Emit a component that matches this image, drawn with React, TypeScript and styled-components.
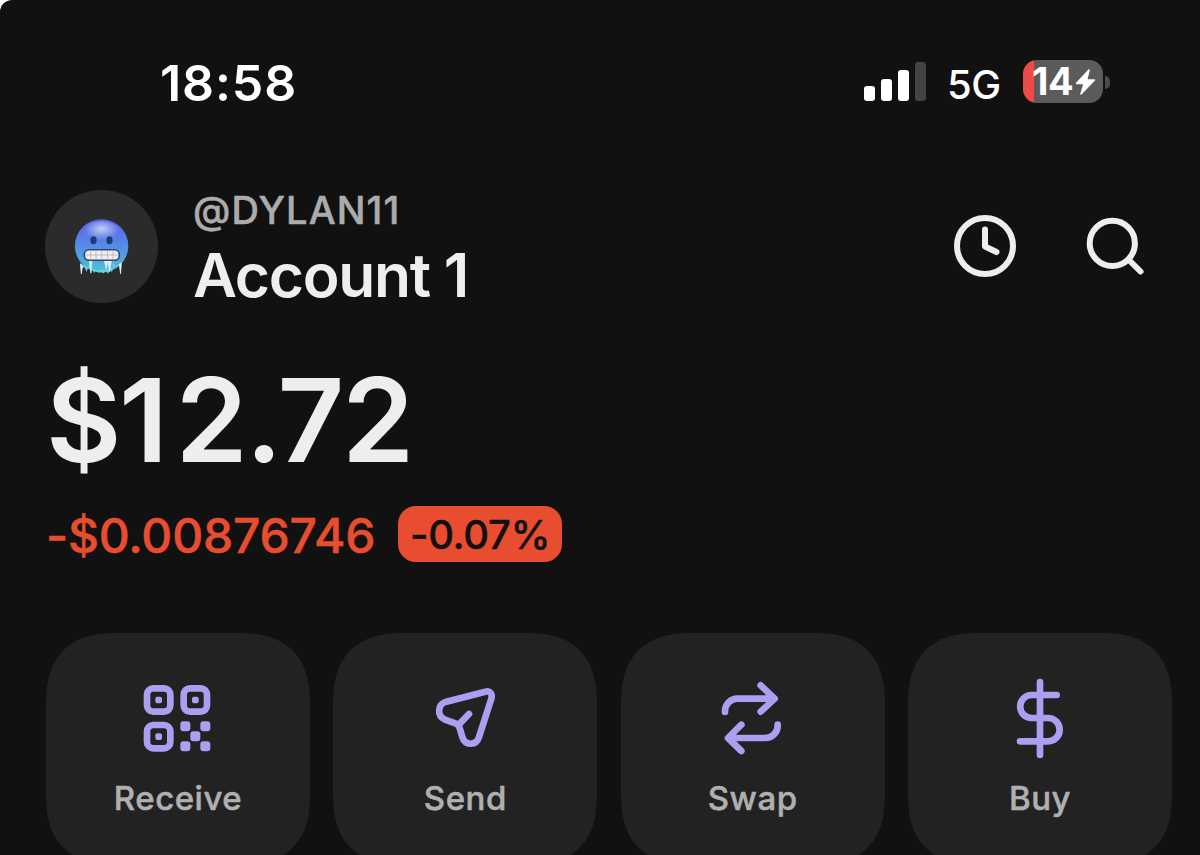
import styled, { createGlobalStyle } from "styled-components";

const GlobalStyle = createGlobalStyle`
  * {
    box-sizing: border-box;
  }
  body {
    margin: 0;
    background: #fff;
    font-family: Inter, "Liberation Sans", sans-serif;
  }
`;

const Screen = styled.div`
  width: 1200px;
  height: 855px;
  padding-top: 58px;
  overflow: hidden;
  background: #111;
  border-top-left-radius: 12px;
`;

const StatusBar = styled.div`
  display: flex;
  align-items: center;
  height: 50px;
  padding: 0 90px 0 160px;
`;

const Time = styled.div`
  flex: 1;
  color: #fff;
  font-size: 50px;
  font-weight: 600;
  line-height: 50px;
  letter-spacing: 0.9px;
`;

const Signal = styled.div`
  display: flex;
  align-items: flex-end;
  gap: 6px;
  height: 39px;
  margin: -4px 21px 0 0;
`;

const SignalBar = styled.span<{ $height: number; $off?: boolean }>`
  width: 11px;
  height: ${props => props.$height}px;
  border-radius: 3px;
  background: ${props => (props.$off ? "#434343" : "#fff")};
`;

const Network = styled.div`
  width: 76px;
  padding-top: 3px;
  color: #fff;
  font-size: 40px;
  font-weight: 500;
  line-height: 40px;
  letter-spacing: -0.4px;
`;

const Battery = styled.div`
  display: flex;
  align-items: center;
  width: 80px;
  height: 43px;
  margin-top: -3px;
  padding-left: 9px;
  border-radius: 14px;
  background: linear-gradient(to right, #ee4b47 11px, #5b5b5b 11px);
  color: #fff;
  font-size: 38px;
  font-weight: 700;
  line-height: 43px;
  letter-spacing: -0.5px;
  svg {
    flex: none;
    margin-left: 2px;
  }
`;

const BatteryCap = styled.span`
  width: 5px;
  height: 13px;
  margin: -2px 0 0 2px;
  border-radius: 0 5px 5px 0;
  background: #4b4b4b;
`;

const Header = styled.header`
  display: flex;
  align-items: flex-start;
  height: 120px;
  margin-top: 82px;
  padding: 0 50px 0 45px;
`;

const Avatar = styled.div`
  width: 113px;
  height: 113px;
  margin-right: 35px;
  border-radius: 50%;
  background: #2b2b2b;
`;

const Names = styled.div`
  flex: 1;
`;

const Handle = styled.div`
  color: #acacac;
  font-size: 38px;
  font-weight: 500;
  line-height: 40px;
  letter-spacing: 1.1px;
  -webkit-text-stroke: 0.5px #acacac;
`;

const AccountName = styled.div`
  margin-top: 8px;
  color: #eee;
  font-size: 60.5px;
  font-weight: 600;
  line-height: 74px;
  letter-spacing: -1.3px;
`;

const HeaderIcons = styled.div`
  display: flex;
  gap: 60px;
  padding-top: 21px;
  svg {
    display: block;
    fill: none;
    stroke: #eee;
    stroke-width: 6;
    stroke-linecap: round;
    stroke-linejoin: round;
  }
`;

const Balance = styled.div`
  margin-top: 52px;
  padding-left: 46px;
  color: #eee;
  font-size: 116px;
  font-weight: 600;
  line-height: 117px;
  letter-spacing: -2.4px;
`;

// the narrow "1" gets the same advance as the digits around it
const NarrowDigit = styled.span`
  letter-spacing: 7.5px;
`;

const Change = styled.div`
  display: flex;
  align-items: center;
  height: 56px;
  margin-top: 27px;
  padding-left: 46px;
`;

const ChangeAmount = styled.div`
  width: 352px;
  padding-top: 3px;
  color: #e84d2f;
  font-size: 48px;
  font-weight: 500;
  line-height: 56px;
  letter-spacing: -0.2px;
  -webkit-text-stroke: 0.5px #e84d2f;
`;

const ChangePercent = styled.div`
  width: 164px;
  height: 56px;
  border-radius: 18px;
  background: #e84d2f;
  color: #111;
  font-size: 40px;
  font-weight: 500;
  line-height: 57px;
  letter-spacing: -0.3px;
  text-align: center;
  -webkit-text-stroke: 0.4px #111;
`;

const Actions = styled.div`
  display: grid;
  grid-template-columns: repeat(4, 1fr);
  gap: 23.4px;
  margin-top: 71px;
  padding: 0 28px 0 46px;
`;

const ActionCard = styled.button`
  display: flex;
  flex-direction: column;
  align-items: center;
  height: 232px;
  padding: 37px 0 0;
  border: 0;
  border-radius: 73px;
  corner-shape: superellipse(1.35);
  background: #222;
  color: #b0b0b0;
  font-family: inherit;
  font-size: 33px;
  font-weight: 500;
  line-height: 40px;
  letter-spacing: 0.5px;
  -webkit-text-stroke: 0.5px #b0b0b0;
  svg {
    display: block;
    margin: 0 1px 8px 0;
    fill: none;
    stroke: #ab9ff2;
    stroke-width: 20;
    stroke-linecap: round;
    stroke-linejoin: round;
  }
  .dot {
    fill: #ab9ff2;
    stroke: none;
  }
`;

const ColdFace = () => (
  <svg width="113" height="113" viewBox="0 0 113 113">
    <defs>
      <linearGradient id="face" x1="0" y1="0" x2="0" y2="1">
        <stop offset="0" stopColor="#5a5fe6" />
        <stop offset="0.45" stopColor="#5687e6" />
        <stop offset="0.75" stopColor="#4fa6df" />
        <stop offset="1" stopColor="#4cc6d3" />
      </linearGradient>
      <radialGradient id="shine" cx="0.5" cy="0.35" r="0.5">
        <stop offset="0" stopColor="#fff" stopOpacity="0.65" />
        <stop offset="1" stopColor="#fff" stopOpacity="0" />
      </radialGradient>
    </defs>
    <circle cx="56.6" cy="55.9" r="26.7" fill="url(#face)" />
    <ellipse cx="56.6" cy="42" rx="18" ry="11" fill="url(#shine)" />
    <ellipse cx="48.5" cy="50.3" rx="3.1" ry="4" fill="#1d3b78" />
    <ellipse cx="64.5" cy="50.3" rx="3.1" ry="4" fill="#1d3b78" />
    <path
      d="M35 73 L36.2 85 L37.6 77 L40 78 L41.5 82 L43 78 L44.4 71 L45.8 84.5 L47.2 79 L49 83 L51 80 L54 83 L56 81 L58 83.5 L61 81 L63 84 L65 79 L67 82.5 L68.5 71 L70 78 L72 76 L74 76 L75.6 84.5 L76.6 72 Q56 88 35 73"
      fill="#6fd0dc"
    />
    <path
      d="M44.5 70 L45.8 83 L47 70 M59 70 L61.3 79 L63 71 L64.6 82 L66.5 70 M35.5 74 L36.3 84 L37.5 76 M74.4 74 L75.6 84 L76.4 73"
      fill="#e6eff8"
      stroke="#e6eff8"
      strokeWidth="0.6"
    />
    <rect x="39.3" y="59.7" width="35" height="10.6" rx="4.8" fill="#f2eef0" stroke="#29457a" strokeWidth="1.6" />
    <path d="M40 65 H73.5 M45.5 60.5 V69.4 M51 60.5 V69.4 M56.8 60.5 V69.4 M62.5 60.5 V69.4 M68 60.5 V69.4" stroke="#b5aeb8" strokeWidth="0.8" />
  </svg>
);

const Bolt = () => (
  <svg width="21" height="28" viewBox="0 0 21 28">
    <path
      d="M14 2 L1.6 15.4 H9.2 L6 26 L19.4 12 H11.6 Z"
      fill="#fff"
      stroke="#fff"
      strokeWidth="1.6"
      strokeLinejoin="round"
    />
  </svg>
);

const ReceiveIcon = () => (
  <svg width="100" height="100" viewBox="-1 0 300 300">
    {[[59, 55], [169, 55], [59, 165]].map(([x, y]) => (
      <g key={`${x}-${y}`}>
        <rect x={x} y={y} width="70" height="70" rx="19" />
        <rect className="dot" x={x + 25} y={y + 25} width="20" height="20" rx="6" />
      </g>
    ))}
    {[[159, 154], [219, 154], [189, 184], [159, 214], [219, 214]].map(([x, y]) => (
      <rect className="dot" key={`${x}-${y}`} x={x} y={y} width="30" height="30" rx="9" />
    ))}
  </svg>
);

const SendIcon = () => (
  <svg width="100" height="100" viewBox="-15 0 300 300">
    <path d="M196 65 L79 95 C52 103 50 138 75 149 L108 161 Q115 164 118 171 L127 201 C136 229 169 227 177 201 L214 86 C218 71 210 61 196 65 Z M117 163 L147 132" />
  </svg>
);

const SwapIcon = () => (
  <svg width="100" height="100" viewBox="8 0 300 300">
    <path d="M77 126 V123 A37 37 0 0 1 114 86 H224 M184 46 L226 86 L184 125" />
    <path d="M235 164 V167 A37 37 0 0 1 198 204 H88 M126 164 L86 204 L126 243" />
  </svg>
);

const BuyIcon = () => (
  <svg width="100" height="100" viewBox="-1 0 300 300">
    <path d="M149 36 V255 M199 75 H124 A34.5 34.5 0 0 0 124 144 H173 A35 35 0 0 1 173 214 H89" />
  </svg>
);

const actions = [
  { label: "Receive", Icon: ReceiveIcon },
  { label: "Send", Icon: SendIcon },
  { label: "Swap", Icon: SwapIcon },
  { label: "Buy", Icon: BuyIcon },
];

const App = () => {
  return (
    <>
      <GlobalStyle />
      <Screen>
        <StatusBar>
          <Time>18:58</Time>
          <Signal>
            <SignalBar $height={15} />
            <SignalBar $height={22} />
            <SignalBar $height={31} />
            <SignalBar $height={39} $off />
          </Signal>
          <Network>5G</Network>
          <Battery>
            14
            <Bolt />
          </Battery>
          <BatteryCap />
        </StatusBar>
        <Header>
          <Avatar>
            <ColdFace />
          </Avatar>
          <Names>
            <Handle>@DYLAN11</Handle>
            <AccountName>Account 1</AccountName>
          </Names>
          <HeaderIcons>
            <svg width="70" height="70" viewBox="0 0 70 70">
              <circle cx="35" cy="35" r="28" />
              <path d="M35 18.5 V35.5 L46.5 41" />
            </svg>
            <svg width="70" height="70" viewBox="0 0 70 70">
              <circle cx="32.3" cy="32.3" r="22.6" />
              <path d="M49 49 L60.5 60.5" />
            </svg>
          </HeaderIcons>
        </Header>
        <Balance>
          $<NarrowDigit>1</NarrowDigit>2.72
        </Balance>
        <Change>
          <ChangeAmount>-$0.00876746</ChangeAmount>
          <ChangePercent>-0.07%</ChangePercent>
        </Change>
        <Actions>
          {actions.map(({ label, Icon }) => (
            <ActionCard key={label}>
              <Icon />
              {label}
            </ActionCard>
          ))}
        </Actions>
      </Screen>
    </>
  );
};

export default App;
